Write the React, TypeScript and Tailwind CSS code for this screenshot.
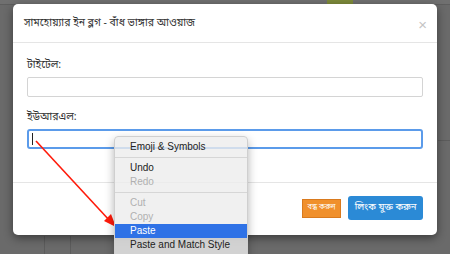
import React from 'react';

const menuGroups: { label: string; disabled?: boolean; active?: boolean }[][] = [
  [{ label: 'Emoji & Symbols' }],
  [{ label: 'Undo' }, { label: 'Redo', disabled: true }],
  [
    { label: 'Cut', disabled: true },
    { label: 'Copy', disabled: true },
    { label: 'Paste', active: true },
    { label: 'Paste and Match Style' },
    { label: 'Delete', disabled: true },
  ],
];

export default function App() {
  return (
    <div className="relative w-[450px] h-[254px] overflow-hidden bg-[#6a6a6a] font-['Liberation_Sans',sans-serif]">
      {/* dimmed page behind the modal */}
      <div className="absolute inset-x-0 top-0 h-[5px] bg-[#707070] border-b border-[#5e5e5e]">
        <div className="absolute left-[327px] top-0 w-[26px] h-[5px] bg-[#7d8a3a]" />
      </div>
      <div className="absolute left-[44px] top-[236px] w-px h-[18px] bg-[#5c5c5c]" />
      <div className="absolute left-[70px] top-[236px] w-px h-[18px] bg-[#5c5c5c]" />
      <div className="absolute left-[438px] top-[140px] w-[12px] h-px bg-[#5c5c5c]" />

      {/* modal */}
      <div className="absolute left-[13px] top-[4px] w-[424px] h-[231px] bg-white rounded-[5px] shadow-[0_3px_10px_rgba(0,0,0,0.45)] flex flex-col">
        <div className="h-[39px] border-b border-[#e5e5e5] flex items-center justify-between pl-[11px] pr-[10px] pt-[2px]">
          <span className="text-[10.5px] text-[#333] font-['Noto_Sans_Bengali','Noto_Sans',sans-serif]">সামহোয়্যার ইন ব্লগ - বাঁধ ভাঙ্গার আওয়াজ</span>
          <span className="text-[15px] text-[#c4c4c4] leading-none">×</span>
        </div>
        <div className="flex flex-col px-[14px] pt-[14px] h-[140px] border-b border-[#e5e5e5] font-['Noto_Sans_Bengali','Noto_Sans',sans-serif]">
          <label className="text-[10.5px] text-[#333] leading-[16px]">টাইটেল:</label>
          <div className="mt-[4px] h-[20px] border border-[#d4d4d4] rounded-[2px]" />
          <label className="mt-[12px] text-[10.5px] text-[#333] leading-[16px]">ইউআরএল:</label>
          <div className="mt-[4px] h-[20px] border-2 border-[#5b9bea] rounded-[3px] flex items-center pl-[3px]">
            <div className="w-px h-[12px] bg-[#222]" />
          </div>
        </div>
        <div className="flex-1 flex items-center justify-end gap-[7px] pr-[14px] pb-[2px] font-['Noto_Sans_Bengali','Noto_Sans',sans-serif]">
          <div className="h-[19px] w-[39px] bg-[#f0902c] border border-[#d97a1e] text-white text-[7.5px] flex items-center justify-center">বন্ধ করুন</div>
          <div className="h-[24px] w-[75px] bg-[#2b8ad6] rounded-[3px] text-white text-[9.5px] flex items-center justify-center">লিংক যুক্ত করুন</div>
        </div>
      </div>

      {/* arrow */}
      <svg className="absolute left-0 top-0" width="450" height="254">
        <line x1="36" y1="141" x2="110" y2="221" stroke="#ff1a0a" strokeWidth="1.6" />
        <polygon points="116,227 104,221 111,214" fill="#ff1a0a" />
      </svg>

      {/* context menu */}
      <div className="absolute left-[114px] top-[136px] w-[134px] h-[130px] bg-[#ececec]/80 rounded-[4px] border border-[#cfcfcf] shadow-[0_4px_10px_rgba(0,0,0,0.3)] pt-[3px] text-[10px]">
        {menuGroups.map((group, gi) => (
          <div key={gi}>
            {gi > 0 && <div className="h-px bg-[#d6d6d6] my-[3px]" />}
            {group.map((item) => (
              <div
                key={item.label}
                className={`h-[14px] leading-[14px] pl-[15px] ${
                  item.active ? 'bg-[#2f72e6] text-white' : item.disabled ? 'text-[#b0b0b0]' : 'text-[#222]'
                }`}
              >
                {item.label}
              </div>
            ))}
          </div>
        ))}
      </div>
    </div>
  );
}
